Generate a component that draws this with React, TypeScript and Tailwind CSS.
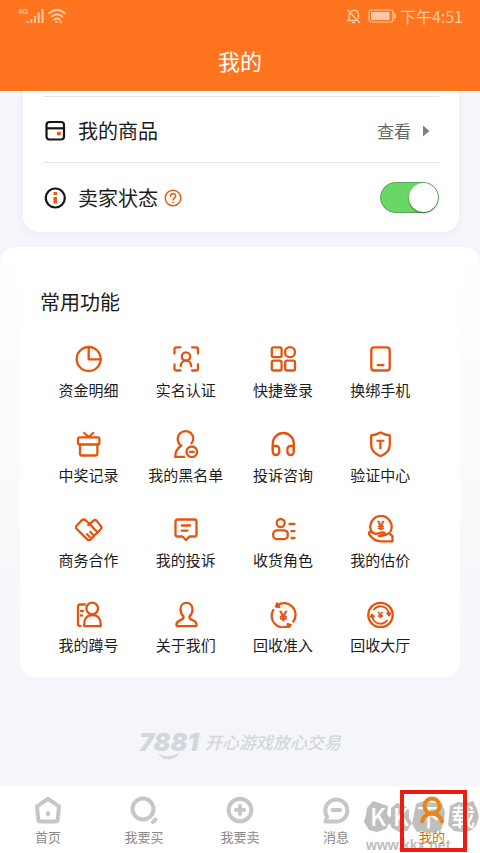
import type { ReactNode } from "react";

type FeatureItem = {
  label: string;
  icon: ReactNode;
};

type TabItem = {
  label: string;
  icon: ReactNode;
  active?: boolean;
};

const Yen = ({ x, y, size }: { x: number; y: number; size: number }) => (
  <text
    x={x}
    y={y}
    fontSize={size}
    textAnchor="middle"
    fill="currentColor"
    stroke="currentColor"
    strokeWidth="0.5"
    fontWeight="700"
    fontFamily="Liberation Sans, sans-serif"
  >
    ¥
  </text>
);

const features: FeatureItem[] = [
  {
    label: "资金明细",
    icon: (
      <>
        <circle cx="13.7" cy="14" r="12" />
        <path d="M13.7 2v12.3h12" />
      </>
    )
  },
  {
    label: "实名认证",
    icon: (
      <>
        <path d="M2.5 8.5V4.300a2 2 0 0 1 2-2H8.500M20 2.300H24a2 2 0 0 1 2 2V8.500M26 19.500v4a2 2 0 0 1-2 2h-4M8.500 25.500H4.500a2 2 0 0 1-2-2V19.500" />
        <circle cx="14" cy="11.500" r="4.200" />
        <path d="M8.800 21.200c0-3 2-5.500 5.200-5.500s5.200 2.500 5.200 5.500" />
      </>
    )
  },
  {
    label: "快捷登录",
    icon: (
      <>
        <rect x="2.8" y="2.3" width="9.8" height="9.8" rx="1.8" />
        <circle cx="21" cy="7.2" r="5" />
        <rect x="2.8" y="15.7" width="9.8" height="9.8" rx="1.8" />
        <rect x="16.2" y="15.7" width="9.8" height="9.8" rx="1.8" />
      </>
    )
  },
  {
    label: "换绑手机",
    icon: (
      <>
        <rect x="5.3" y="2.3" width="18.4" height="23.2" rx="2.8" />
        <path d="M11.8 20.2h5.600" />
      </>
    )
  },
  {
    label: "中奖记录",
    icon: (
      <>
        <rect x="3" y="7.3" width="21.4" height="7.2" rx="1.8" />
        <path d="M5 14.500v9a2 2 0 0 0 2 2h13.400a2 2 0 0 0 2-2v-9M9.200 3l4.500 4 4.500-4" />
      </>
    )
  },
  {
    label: "我的黑名单",
    icon: (
      <>
        <path d="M12 27H3.200c0-4.500 1.500-8.500 6-11.300C6.800 14.200 5.700 11.500 5.700 8.800 5.700 4.500 9 1.200 13.500 1.200s7.800 3.300 7.800 7.300c0 2-.6 3.400-1.800 4.800" />
        <circle cx="19.8" cy="21.8" r="5.3" />
        <path d="M17.800 21.800h4" />
      </>
    )
  },
  {
    label: "投诉咨询",
    icon: (
      <>
        <path d="M3.800 20v-6.500a10.500 10.500 0 0 1 21 0V20" />
        <path d="M3.800 16h3.400a3 3 0 0 1 3 3v2.800a3.200 3.200 0 0 1-6.400 0zM24.800 16h-3.400a3 3 0 0 0-3 3v2.800a3.200 3.200 0 0 0 6.400 0z" />
      </>
    )
  },
  {
    label: "验证中心",
    icon: (
      <>
        <path d="M14.500 2.500c3 1.700 6 2.600 9.300 2.800v9.500c0 5.500-4 9.300-9.300 11.400-5.300-2.100-9.300-5.900-9.300-11.400V5.300c3.300-.2 6.300-1.100 9.300-2.800z" />
        <text
          x="14.5"
          y="18.5"
          fontSize="12"
          textAnchor="middle"
          fill="currentColor"
          strokeWidth="0.5"
          fontWeight="700"
          fontFamily="Liberation Sans, sans-serif"
        >
          T
        </text>
      </>
    )
  },
  {
    label: "商务合作",
    icon: (
      <>
        <path d="M14.200 8.500l-3.300-3a3.200 3.200 0 0 0-4.400 0L1.500 11a2 2 0 0 0 0 2.800l11 10.800a2 2 0 0 0 2.800 0l10.400-10.300a2.500 2.500 0 0 0 0-3.400l-4.300-5.300a2 2 0 0 0-2.800 0L13.300 10" />
        <path d="M14.200 8.500l8.300 8.700M12 19.200l2.800 2.800M15.300 17l2.800 2.800" />
      </>
    )
  },
  {
    label: "我的投诉",
    icon: (
      <>
        <path d="M5.500 4.500h17a2 2 0 0 1 2 2v13a2 2 0 0 1-2 2h-5L14 25l-3.500-3.500h-5a2 2 0 0 1-2-2v-13a2 2 0 0 1 2-2z" />
        <path d="M9.800 10.500h8.400M9.800 15.700h5.600" />
      </>
    )
  },
  {
    label: "收货角色",
    icon: (
      <>
        <circle cx="11.7" cy="8" r="4" />
        <rect x="4.2" y="15.3" width="14.6" height="8.8" rx="3.8" />
        <path d="M20.500 9H25.500M22.500 16.200H25.500M22.500 23H25.500" />
      </>
    )
  },
  {
    label: "我的估价",
    icon: (
      <>
        <path d="M6 17.500A10.700 10.700 0 1 1 24.500 16.500" />
        <path d="M8.500 18.500c-2-1.500-3.600-2.500-5-1.500-1 .8-.6 2.200.5 3.500 3 3.700 6.200 5.800 11 5.800h11.500v-5.200l-3.500-3c-2.700 2-5.500 3.400-10 2.800l5-1.200c1.600-.6.700-2.700-1.200-2.300l-4.800 1c-1.200.2-2.300.7-3.500.1z" />
        <Yen x={14.8} y={15} size={12} />
      </>
    )
  },
  {
    label: "我的蹲号",
    icon: (
      <>
        <path d="M10 4.500H5a2 2 0 0 0-2 2v17.500a2 2 0 0 0 2 2h.5M6 11h2M6 15.500h1" />
        <circle cx="17.2" cy="8.500" r="5.8" />
        <path d="M9.200 26.200V24c0-5.200 3-9 8.200-9s8.300 3.800 8.300 9v2.200z" />
      </>
    )
  },
  {
    label: "关于我们",
    icon: (
      <path d="M14.500 2.800c-3.700 0-6 2.800-6 6.400 0 3.300 1.300 5.500 3 7.300.6 2.200-1.300 3-3.500 3.800-2.600 1-3.600 2.500-3.600 4.600 0 .8.500 1.300 1.300 1.300h17.600c.8 0 1.300-.5 1.300-1.300 0-2.100-1-3.600-3.600-4.600-2.200-.8-4.100-1.600-3.500-3.800 1.700-1.800 3-4 3-7.300 0-3.600-2.300-6.400-6-6.400z" />
    )
  },
  {
    label: "回收准入",
    icon: (
      <>
        <path d="M8.500 5.200A11.500 11.500 0 0 1 24.300 21.500M4.300 10A11.500 11.500 0 0 0 20 25.800" />
        <path d="M8 3.500L7 6.500l3.300.3zM18.800 24l3 1-2 2z" fill="currentColor" />
        <Yen x={14.3} y={20.5} size={14} />
      </>
    )
  },
  {
    label: "回收大厅",
    icon: (
      <>
        <circle cx="14.5" cy="15" r="12.2" />
        <path d="M8 9.500A8.300 8.300 0 0 1 22.800 14M21 20.500A8.300 8.300 0 0 1 6.200 16" strokeWidth="1.800" />
        <path d="M21.300 13.300h2.700l-.8 2zM5 16.700l1-2 1.700 2z" fill="currentColor" />
        <Yen x={14.5} y={18.3} size={9} />
      </>
    )
  }
];

const tabs: TabItem[] = [
  {
    label: "首页",
    icon: (
      <>
        <path d="M13 1.800L2 9.300l1.300 13.300a2 2 0 0 0 2 1.800h15.400a2 2 0 0 0 2-1.800L24 9.300z" />
        <path d="M13 16v1.500" />
      </>
    )
  },
  {
    label: "我要买",
    icon: (
      <>
        <circle cx="12" cy="12" r="10.5" />
        <path d="M22 25l2.500-2.500" />
      </>
    )
  },
  {
    label: "我要卖",
    icon: (
      <>
        <circle cx="13" cy="13" r="11.3" />
        <path d="M9 13h8M13 9v8" />
      </>
    )
  },
  {
    label: "消息",
    icon: (
      <>
        <path d="M2.500 24.500l1.600-5A11 11 0 1 1 13.500 24.500z" />
        <path d="M9.500 13h7.500" />
      </>
    )
  },
  {
    label: "我的",
    active: true,
    icon: (
      <>
        <circle cx="13" cy="9" r="7.5" />
        <path d="M3 24.500c1.300-4.500 4.500-8 10-8s8.700 3.500 10 8" />
      </>
    )
  }
];

const StatusBar = () => (
  <div className="flex h-8 items-center justify-between pl-[18px] pr-[17px] text-[#ffcaa3]">
    <div className="flex items-end">
      <span className="self-start font-[Roboto,sans-serif] text-[8px] font-medium leading-[8px]">4G</span>
      <svg viewBox="0 0 18 16" className="-ml-0.5 h-4 w-[18px]" stroke="currentColor" strokeWidth="2" fill="none">
        <path d="M1.500 15v-2M5.300 15v-4M9 15V8M12.700 15V4.500M16.500 15V1" />
      </svg>
      <svg
        viewBox="0 0 18 16"
        className="ml-1 h-4 w-[18px]"
        stroke="currentColor"
        strokeWidth="2"
        fill="none"
        strokeLinecap="round"
      >
        <path d="M1.200 5.200c4.600-4.200 11-4.200 15.600 0M3.800 8.500c3.100-2.700 7.300-2.700 10.400 0M6.400 11.500c1.600-1.200 3.600-1.200 5.200 0M8 14h.5M12.500 14h.5" />
      </svg>
    </div>
    <div className="flex items-center">
      <svg
        viewBox="0 0 16 16"
        className="h-4 w-4"
        stroke="currentColor"
        strokeWidth="1.500"
        fill="none"
        strokeLinecap="round"
      >
        <path d="M1.500 2l12 12.500M5 3.500C9 .5 12.500 3 12.500 7v3M3.300 6v4.500L1.800 12.500h8.700M6.500 14.500h2" />
      </svg>
      <svg viewBox="0 0 28 14" className="ml-1.5 h-3.5 w-7" fill="none">
        <rect x="1" y="1" width="24" height="12" rx="2.5" stroke="currentColor" strokeWidth="1.200" />
        <rect x="3" y="3" width="18.5" height="8" rx="0.500" fill="currentColor" />
        <path d="M27 4.500v5" stroke="currentColor" strokeWidth="1.800" />
      </svg>
      <span className="ml-1 text-[16px] leading-5">下午4:51</span>
    </div>
  </div>
);

const SellerCard = () => (
  <section className="ml-[23px] mr-[21px] rounded-b-2xl bg-white px-5 pt-[5px] shadow-[0_2px_8px_rgba(40,50,90,0.06)]">
    <div className="flex h-[66px] items-center border-t border-[#e6e6e8] pt-0.5">
      <svg viewBox="0 0 24 24" className="h-6 w-6" fill="none" stroke="#161616" strokeWidth="2.200">
        <rect x="3.5" y="3" width="17.5" height="17.5" rx="3" />
        <path d="M3.500 9.300h17.500" />
        <rect x="14" y="12.800" width="3.800" height="3.500" fill="#ec5a10" stroke="none" />
      </svg>
      <span className="ml-[11px] text-[20px] leading-7 text-[#1c1c1c]">我的商品</span>
      <a href="#goods" className="ml-auto flex items-center pr-[9px] text-[17px] leading-6 text-[#666]">
        查看
        <svg viewBox="0 0 8 12" className="ml-[11px] h-3 w-2" fill="#808080">
          <path d="M1 0.500l6.500 5.500L1 11.500z" />
        </svg>
      </a>
    </div>
    <div className="flex h-[70px] items-center border-t border-[#e6e6e8]">
      <svg viewBox="0 0 24 24" className="h-6 w-6" fill="none">
        <circle cx="12.3" cy="12" r="9.5" stroke="#161616" strokeWidth="2.200" />
        <path d="M10.500 6h3.500v3h-3.500zM10.500 11h3.500v6.500h-3.500z" fill="#ec5a10" />
      </svg>
      <label htmlFor="seller-status" className="ml-[11px] text-[20px] leading-7 text-[#1c1c1c]">
        卖家状态
      </label>
      <button type="button" aria-label="帮助" className="ml-1.5 text-[#e8590c]">
        <svg
          viewBox="0 0 18 18"
          className="h-[18px] w-[18px]"
          fill="none"
          stroke="currentColor"
          strokeWidth="1.500"
          strokeLinecap="round"
        >
          <circle cx="9" cy="9" r="7.8" />
          <path d="M6.500 7.200c0-3.300 5.200-3.300 5.200-.2 0 1.900-2.600 1.900-2.600 3.800M9.100 13v.4" />
        </svg>
      </button>
      <input
        id="seller-status"
        type="checkbox"
        role="switch"
        defaultChecked
        className="ml-auto flex h-[31px] w-[59px] appearance-none items-center rounded-full border border-[#888] bg-[#ddd] before:h-[29px] before:w-[29px] before:rounded-full before:bg-white before:shadow-[0_1px_2px_rgba(0,0,0,0.5)] checked:justify-end checked:border-[#59a455] checked:bg-[#69d765]"
      />
    </div>
  </section>
);

const FeatureGrid = () => (
  <section className="mt-[15px] rounded-t-2xl bg-linear-to-b from-white to-[#f5f6fa] px-5">
    <div className="rounded-2xl bg-white pb-[22px] pl-5 pr-[31px] pt-[41px]">
      <h2 className="text-[20px] leading-7 text-[#1c1c1c]">常用功能</h2>
      <div className="mt-[29px] grid grid-cols-4 gap-y-[30px]">
        {features.map((item) => (
          <button key={item.label} type="button" className="flex flex-col items-center">
            <svg
              viewBox="0 0 28 28"
              className="h-7 w-7 text-[#e5540f]"
              fill="none"
              stroke="currentColor"
              strokeWidth="2.300"
              strokeLinecap="round"
              strokeLinejoin="round"
            >
              {item.icon}
            </svg>
            <span className="mt-[7px] whitespace-nowrap text-[15px] leading-5 text-[#1c1c1c]">{item.label}</span>
          </button>
        ))}
      </div>
    </div>
  </section>
);

const Slogan = () => (
  <div className="flex flex-1 items-start justify-center pb-6 pt-[55px] text-[#d3d6db]">
    <div className="relative">
      <span className="block font-[Inter,sans-serif] text-[25px] font-black italic leading-5">7881</span>
      <svg
        viewBox="0 0 24 8"
        className="absolute left-1/2 top-full h-2 w-6 -translate-x-3"
        fill="currentColor"
      >
        <path d="M1 1c5 4.500 15 4.500 22-1-5 9-17 10-22 1z" />
      </svg>
    </div>
    <span className="ml-1.5 text-[17px] font-medium italic leading-5">开心游戏放心交易</span>
  </div>
);

const Watermark = () => (
  <div aria-hidden="true" className="pointer-events-none absolute right-0 top-3.5 w-[116px]">
    <svg viewBox="0 0 116 34" className="block h-[34px] w-[116px]" fill="#bfbfbf">
      <path d="M3 8L9 1l9 3 6 2-1 8 4 6-5 9-9 3-8-2-5-8 2-7zM27 8l6-5 7 2 5 5v8l3 5-5 8-8 1-7-4-4-7 3-6zM52 4l8-3 10 2 8 0 3 9-1 9-3 9-8 3-8-2-8 1-5-8 2-10zM86 6l8-4 8 1 7-2 4 8 2 8-3 9-6 5-8 1-8-1-6-6 1-9z" />
      <g
        fill="#fff"
        fontSize="24"
        fontWeight="500"
        textAnchor="middle"
        fontFamily="Noto Sans CJK SC, sans-serif"
      >
        <text x="14" y="26">K</text>
        <text x="37" y="26">K</text>
        <text x="65" y="26">下</text>
        <text x="99" y="26">载</text>
      </g>
    </svg>
    <span className="mt-[3px] block pl-0.5 font-[Liberation_Sans,sans-serif] text-[14px] font-bold leading-4 text-[#bdbdbd]">
      www.kkx.net
    </span>
  </div>
);

const TabBar = () => (
  <nav className="relative grid grid-cols-5 bg-white pb-1.5 pt-[11px]">
    <Watermark />
    {tabs.map((tab) => (
      <button
        key={tab.label}
        type="button"
        className={`relative flex flex-col items-center ${tab.active ? "text-[#e8851a]" : "text-[#c6c6c6]"}`}
      >
        <svg
          viewBox="0 0 26 26"
          className="h-[26px] w-[26px] overflow-visible"
          fill="none"
          stroke="currentColor"
          strokeWidth="4"
          strokeLinecap="round"
          strokeLinejoin="round"
        >
          {tab.icon}
        </svg>
        <span className={`mt-1 text-[13px] leading-5 ${tab.active ? "text-[#cf6a20]" : "text-[#8a8a8a]"}`}>
          {tab.label}
        </span>
      </button>
    ))}
    <div className="pointer-events-none absolute inset-y-0 right-0 flex w-1/5 justify-center pt-1">
      <div className="mb-px ml-[3px] w-[67px] border-4 border-[#ee1c10]" />
    </div>
  </nav>
);

export default function App() {
  return (
    <div className="flex min-h-screen flex-col bg-[#f4f6fb] font-[Noto_Sans_CJK_SC,sans-serif]">
      <header className="bg-[#ff751f]">
        <StatusBar />
        <h1 className="pb-[15px] pt-3 text-center text-[22px] leading-8 text-white">我的</h1>
      </header>
      <main className="flex flex-1 flex-col">
        <SellerCard />
        <FeatureGrid />
        <Slogan />
      </main>
      <TabBar />
    </div>
  );
}
